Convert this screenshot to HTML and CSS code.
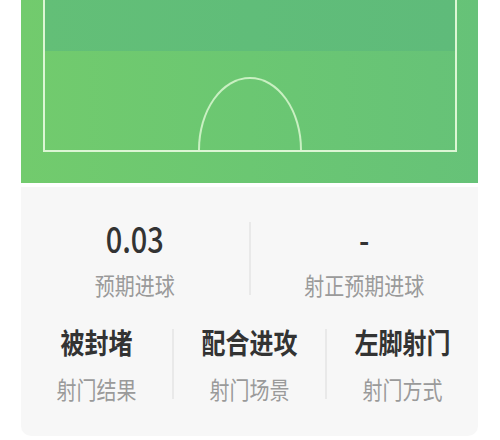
FILE: index.html
```html
<!DOCTYPE html>
<html lang="zh-CN">

<head>
    <meta charset="UTF-8">
    <meta name="viewport" content="width=device-width, initial-scale=1.0">
    <title>射门详情</title>
    <link rel="stylesheet" href="styles.css">
</head>

<body>
    <div class="wrap">
        <div class="pitch">
            <div class="field">
                <div class="band"></div>
                <div class="arc"></div>
            </div>
        </div>

        <div class="stats">
            <div class="row">
                <div class="cell">
                    <div class="value">0.03</div>
                    <div class="label">预期进球</div>
                </div>
                <div class="line"></div>
                <div class="cell">
                    <div class="value">-</div>
                    <div class="label">射正预期进球</div>
                </div>
            </div>

            <div class="row row-three">
                <div class="cell">
                    <div class="title">被封堵</div>
                    <div class="label">射门结果</div>
                </div>
                <div class="line"></div>
                <div class="cell">
                    <div class="title">配合进攻</div>
                    <div class="label">射门场景</div>
                </div>
                <div class="line"></div>
                <div class="cell">
                    <div class="title">左脚射门</div>
                    <div class="label">射门方式</div>
                </div>
            </div>
        </div>
    </div>
</body>

</html>
```

FILE: styles.css
```css
body {
    margin: 0;
    background-color: #ffffff;
    font-family: "Noto Sans CJK SC", "Noto Sans", sans-serif;
}

.wrap {
    width: 457px;
    margin-left: 21px;
}

.pitch {
    height: 183px;
    padding: 0 21px 0 22px;
    box-sizing: border-box;
    background: linear-gradient(to right, #72cb6d, #6bc772 50%, #66c278);
}

.field {
    height: 152px;
    display: flex;
    flex-direction: column;
    border: 2px solid #dcf6d4;
    border-top: none;
    box-sizing: border-box;
}

.band {
    height: 51px;
    background: linear-gradient(to right, #63bf77, #60bd79 50%, #5fbb7a);
}

.arc {
    width: 104px;
    height: 73px;
    margin-top: auto;
    align-self: center;
    border: 2px solid #c9f0c2;
    border-bottom: none;
    border-radius: 52px 52px 0 0 / 73px 73px 0 0;
    box-sizing: border-box;
}

.stats {
    margin-top: 4px;
    padding: 32px 0 33px;
    background-color: #f7f7f7;
    border-radius: 0 0 10px 10px;
}

.row {
    display: flex;
}

.row-three {
    margin-top: 27px;
}

.cell {
    flex: 1;
    display: flex;
    flex-direction: column;
    align-items: center;
}

.line {
    width: 2px;
    margin: 3px 0 4px;
    background-color: #e9e9e9;
}

/* the capture is a little taller than wide */
.value,
.title,
.label {
    transform: scaleY(1.2);
}

.value {
    font-size: 29px;
    line-height: 36px;
    font-weight: 500;
    color: #333333;
}

.title {
    font-size: 24px;
    line-height: 32px;
    font-weight: 700;
    color: #333333;
}

.label {
    margin-top: 16px;
    font-size: 20px;
    line-height: 28px;
    color: #9a9a9a;
}

.row-three .label {
    margin-top: 17px;
}
```
